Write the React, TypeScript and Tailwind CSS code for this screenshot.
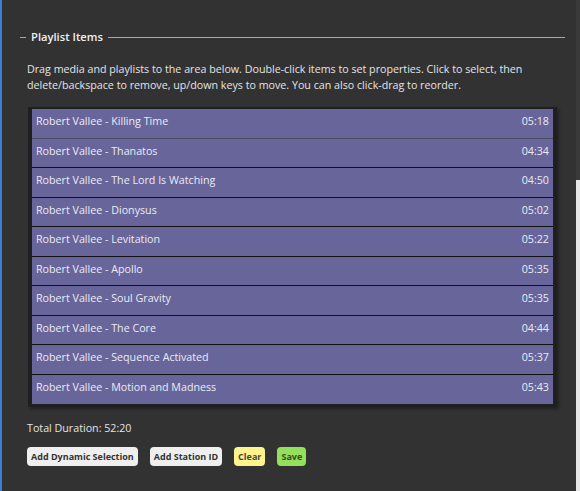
import React from 'react';

const ITEMS = [
  { title: 'Robert Vallee - Killing Time', time: '05:18' },
  { title: 'Robert Vallee - Thanatos', time: '04:34' },
  { title: 'Robert Vallee - The Lord Is Watching', time: '04:50' },
  { title: 'Robert Vallee - Dionysus', time: '05:02' },
  { title: 'Robert Vallee - Levitation', time: '05:22' },
  { title: 'Robert Vallee - Apollo', time: '05:35' },
  { title: 'Robert Vallee - Soul Gravity', time: '05:35' },
  { title: 'Robert Vallee - The Core', time: '04:44' },
  { title: 'Robert Vallee - Sequence Activated', time: '05:37' },
  { title: 'Robert Vallee - Motion and Madness', time: '05:43' },
];

const App: React.FC = () => {
  return (
    <div
      className="flex w-[580px] h-[491px] bg-[#323233] overflow-hidden"
      style={{ fontFamily: '"Open Sans", "Noto Sans", sans-serif' }}
    >
      {/* left accent */}
      <div className="w-[2px] bg-[#3d7fd3]" />

      <div className="flex-1 flex flex-col pt-[29px]">
        {/* fieldset legend */}
        <div className="flex items-center h-4 pl-[18px] pr-[11px]">
          <div className="w-[6px] h-px bg-[#a8a8a8]" />
          <span className="px-[5px] text-[11.2px] font-semibold text-[#f0f0f0]">Playlist Items</span>
          <div className="flex-1 h-px bg-[#a8a8a8]" />
        </div>

        <p className="mt-[16px] pl-[25px] text-[10.7px] leading-4 text-[#e4e4e4]">
          Drag media and playlists to the area below. Double-click items to set properties. Click to select, then
          <br />
          delete/backspace to remove, up/down keys to move. You can also click-drag to reorder.
        </p>

        {/* list */}
        <div className="mt-[14px] ml-[26px] w-[529px] bg-[#1f1f21] px-[4px] pt-[2px] pb-[3px] shadow-[2px_2px_3px_rgba(0,0,0,0.35)]">
          {ITEMS.map((it, i) => (
            <div
              key={i}
              className={`flex items-start justify-between h-[29.5px] pt-[5px] px-[4px] leading-[15px] bg-[#67659a] text-[10.7px] text-[#ecebf5] border-b ${
                i === 0 ? 'border-[#4a4960]' : 'border-[#111]'
              } last:border-b-0`}
            >
              <span>{it.title}</span>
              <span>{it.time}</span>
            </div>
          ))}
        </div>

        <div className="mt-[13px] pl-[25px] text-[10.7px] text-[#e4e4e4]">Total Duration: 52:20</div>

        <div className="mt-[11px] pl-[25px] flex gap-3">
          <button className="h-[19px] px-[4px] rounded-[4px] bg-[#efefef] text-[9px] font-bold text-[#333]">
            Add Dynamic Selection
          </button>
          <button className="h-[19px] px-[4px] rounded-[4px] bg-[#efefef] text-[9px] font-bold text-[#333]">
            Add Station ID
          </button>
          <button className="h-[19px] px-[4px] rounded-[4px] bg-[#fff48c] text-[9px] font-bold text-[#444]">
            Clear
          </button>
          <button className="h-[19px] px-[4px] rounded-[4px] bg-[#93e05a] text-[9px] font-bold text-[#3a4a2a]">
            Save
          </button>
        </div>
      </div>

      {/* scrollbar */}
      <div className="w-[4px] flex flex-col">
        <div className="h-[180px] bg-[#3a3a3b]" />
        <div className="flex-1 bg-[#e6e6e6]" />
      </div>
    </div>
  );
};

export default App;
